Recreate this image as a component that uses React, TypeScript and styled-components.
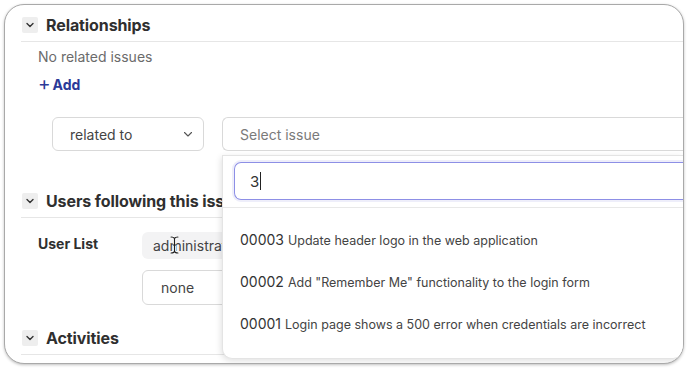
import React from 'react';
import styled, { createGlobalStyle } from 'styled-components';

const GlobalStyle = createGlobalStyle`
  html, body {
    margin: 0;
    padding: 0;
    background: #ffffff;
  }
  body {
    font-family: Inter, "Noto Sans", "Liberation Sans", sans-serif;
    color: #333333;
  }
`;

const colors = {
  text: '#2f2f2f',
  gray: '#6b6b6b',
  border: '#d9d9d9',
  divider: '#e6e6e6',
  blue: '#2b3a98',
  focus: '#8d8fe6',
  chip: '#f3f3f4',
};

const issues = [
  { id: '00003', title: 'Update header logo in the web application' },
  { id: '00002', title: 'Add "Remember Me" functionality to the login form' },
  { id: '00001', title: 'Login page shows a 500 error when credentials are incorrect' },
];

function Chevron() {
  return (
    <svg width="10" height="10" viewBox="0 0 10 10" fill="none">
      <path d="M2 3.5 L5 6.5 L8 3.5" stroke="#333" strokeWidth="1.4" strokeLinecap="round" strokeLinejoin="round" />
    </svg>
  );
}

function SelectChevron() {
  return (
    <svg width="12" height="12" viewBox="0 0 12 12" fill="none">
      <path d="M2.5 4.5 L6 8 L9.5 4.5" stroke="#555" strokeWidth="1.1" strokeLinecap="round" strokeLinejoin="round" />
    </svg>
  );
}

function IBeam() {
  return (
    <svg width="9" height="18" viewBox="0 0 9 18" fill="none">
      <path d="M1 1 C3 1 4.5 1.5 4.5 3 L4.5 15 C4.5 16.5 3 17 1 17" stroke="#ffffff" strokeWidth="2.6" strokeLinecap="round" />
      <path d="M8 1 C6 1 4.5 1.5 4.5 3 L4.5 15 C4.5 16.5 6 17 8 17" stroke="#ffffff" strokeWidth="2.6" strokeLinecap="round" />
      <path d="M1 1 C3 1 4.5 1.5 4.5 3 L4.5 15 C4.5 16.5 3 17 1 17" stroke="#1e1e1e" strokeWidth="1.1" strokeLinecap="round" />
      <path d="M8 1 C6 1 4.5 1.5 4.5 3 L4.5 15 C4.5 16.5 6 17 8 17" stroke="#1e1e1e" strokeWidth="1.1" strokeLinecap="round" />
      <path d="M3 9 L6 9" stroke="#1e1e1e" strokeWidth="1" />
    </svg>
  );
}

function SectionHeader({ title, top }: { title: string; top?: number }) {
  return (
    <Header $top={top}>
      <ToggleBox>
        <Chevron />
      </ToggleBox>
      <HeaderTitle>{title}</HeaderTitle>
    </Header>
  );
}

export default function App() {
  return (
    <>
      <GlobalStyle />
      <Frame>
        <Window>
          <SectionHeader title="Relationships" />
          <RelBody>
            <Muted>No related issues</Muted>
            <AddLink>
              <Plus>+</Plus>Add
            </AddLink>
            <SelectRow>
              <TypeSelect>
                <span>related to</span>
                <SelectChevron />
              </TypeSelect>
              <IssueSelect>Select issue</IssueSelect>
            </SelectRow>
          </RelBody>

          <SectionHeader title="Users following this issue" top={33} />
          <UsersBody>
            <FieldLabel>User List</FieldLabel>
            <UserColumn>
              <UserChip>
                administrator
                <PointerCursor>
                  <IBeam />
                </PointerCursor>
              </UserChip>
              <NoneSelect>none</NoneSelect>
            </UserColumn>
          </UsersBody>

          <SectionHeader title="Activities" top={16} />

          <Dropdown>
            <SearchArea>
              <SearchInput>
                3<TextCursor />
              </SearchInput>
            </SearchArea>
            <OptionList>
              {issues.map((issue) => (
                <Option key={issue.id}>
                  <IssueId>{issue.id}</IssueId>
                  <IssueTitle>{issue.title}</IssueTitle>
                </Option>
              ))}
            </OptionList>
          </Dropdown>
        </Window>
      </Frame>
    </>
  );
}

const Frame = styled.div`
  width: 688px;
  height: 368px;
  padding: 4px;
  box-sizing: border-box;
`;

const Window = styled.div`
  position: relative;
  width: 680px;
  height: 360px;
  box-sizing: border-box;
  border: 1px solid #a9a9a9;
  border-radius: 20px;
  box-shadow: 0 1px 3px rgba(0, 0, 0, 0.25);
  overflow: hidden;
  background: #ffffff;
  padding: 3px 0 0 16px;
`;

const Header = styled.div<{ $top?: number }>`
  display: flex;
  align-items: center;
  gap: 8px;
  height: 33px;
  margin-top: ${(p) => p.$top ?? 0}px;
  padding-left: 1px;
  border-bottom: 1px solid ${colors.divider};
`;

const ToggleBox = styled.div`
  width: 16px;
  height: 16px;
  margin-top: 1px;
  border-radius: 2px;
  background: #eeeeee;
  display: flex;
  align-items: center;
  justify-content: center;
`;

const HeaderTitle = styled.h2`
  margin: 0;
  font-size: 16px;
  font-weight: 700;
  color: ${colors.text};
  letter-spacing: -0.1px;
  white-space: nowrap;
`;

const RelBody = styled.div`
  display: flex;
  flex-direction: column;
  padding-left: 17px;
`;

const Muted = styled.div`
  margin-top: 6px;
  font-size: 14px;
  line-height: 18px;
  color: ${colors.gray};
`;

const AddLink = styled.div`
  margin-top: 10px;
  display: flex;
  align-items: center;
  gap: 2px;
  font-size: 14px;
  line-height: 18px;
  font-weight: 700;
  color: ${colors.blue};
`;

const Plus = styled.span`
  font-size: 19px;
  font-weight: 400;
  line-height: 18px;
  margin-top: -2px;
`;

const SelectRow = styled.div`
  display: flex;
  gap: 18px;
  margin-top: 23px;
  padding-left: 14px;
`;

const TypeSelect = styled.div`
  width: 152px;
  height: 34px;
  box-sizing: border-box;
  border: 1px solid ${colors.border};
  border-radius: 6px;
  display: flex;
  align-items: center;
  justify-content: space-between;
  padding: 0 9px 0 17px;
  font-size: 14px;
  color: #444;
`;

const IssueSelect = styled.div`
  flex: 1;
  height: 34px;
  box-sizing: border-box;
  border: 1px solid ${colors.border};
  border-radius: 6px 0 0 6px;
  border-right: none;
  display: flex;
  align-items: center;
  padding-left: 17px;
  font-size: 14px;
  color: #7a7a7a;
`;

const UsersBody = styled.div`
  display: flex;
  padding: 14px 0 0 17px;
`;

const FieldLabel = styled.div`
  width: 104px;
  padding-top: 3px;
  font-size: 14px;
  font-weight: 700;
  color: ${colors.text};
  line-height: 18px;
`;

const UserColumn = styled.div`
  display: flex;
  flex-direction: column;
  gap: 11px;
`;

const UserChip = styled.div`
  position: relative;
  height: 27px;
  width: 110px;
  box-sizing: border-box;
  border-radius: 6px;
  background: ${colors.chip};
  display: flex;
  align-items: center;
  padding-left: 11px;
  font-size: 14px;
  color: #444;
  white-space: nowrap;
`;

const PointerCursor = styled.span`
  position: absolute;
  left: 28px;
  top: 4px;
  display: flex;
`;

const NoneSelect = styled.div`
  height: 35px;
  width: 110px;
  box-sizing: border-box;
  border: 1px solid ${colors.border};
  border-radius: 6px;
  display: flex;
  align-items: center;
  padding-left: 18px;
  font-size: 14px;
  color: #444;
`;

const Dropdown = styled.div`
  position: absolute;
  left: 217px;
  top: 150px;
  right: 0;
  height: 202px;
  background: #ffffff;
  border: 1px solid #e4e4e4;
  border-right: none;
  border-radius: 0 0 10px 10px;
  box-shadow: -1px 2px 6px rgba(0, 0, 0, 0.12);
  display: flex;
  flex-direction: column;
`;

const SearchArea = styled.div`
  padding: 6px 0 7px 11px;
  border-bottom: 1px solid #e8e8e8;
`;

const SearchInput = styled.div`
  height: 38px;
  box-sizing: border-box;
  border: 1.5px solid ${colors.focus};
  border-right: none;
  border-radius: 7px 0 0 7px;
  box-shadow: 0 0 0 2px #eeeefa;
  display: flex;
  align-items: center;
  padding-left: 15px;
  font-size: 15px;
  color: #333;
`;

const TextCursor = styled.span`
  display: inline-block;
  width: 1px;
  height: 18px;
  background: #222;
  margin-left: 1px;
`;

const OptionList = styled.div`
  display: flex;
  flex-direction: column;
  padding: 23px 0 0 17px;
  gap: 24px;
`;

const Option = styled.div`
  display: flex;
  align-items: baseline;
  gap: 4px;
  height: 18px;
  white-space: nowrap;
`;

const IssueId = styled.span`
  font-size: 14px;
  color: #333;
`;

const IssueTitle = styled.span`
  font-size: 12.5px;
  color: #444;
`;
